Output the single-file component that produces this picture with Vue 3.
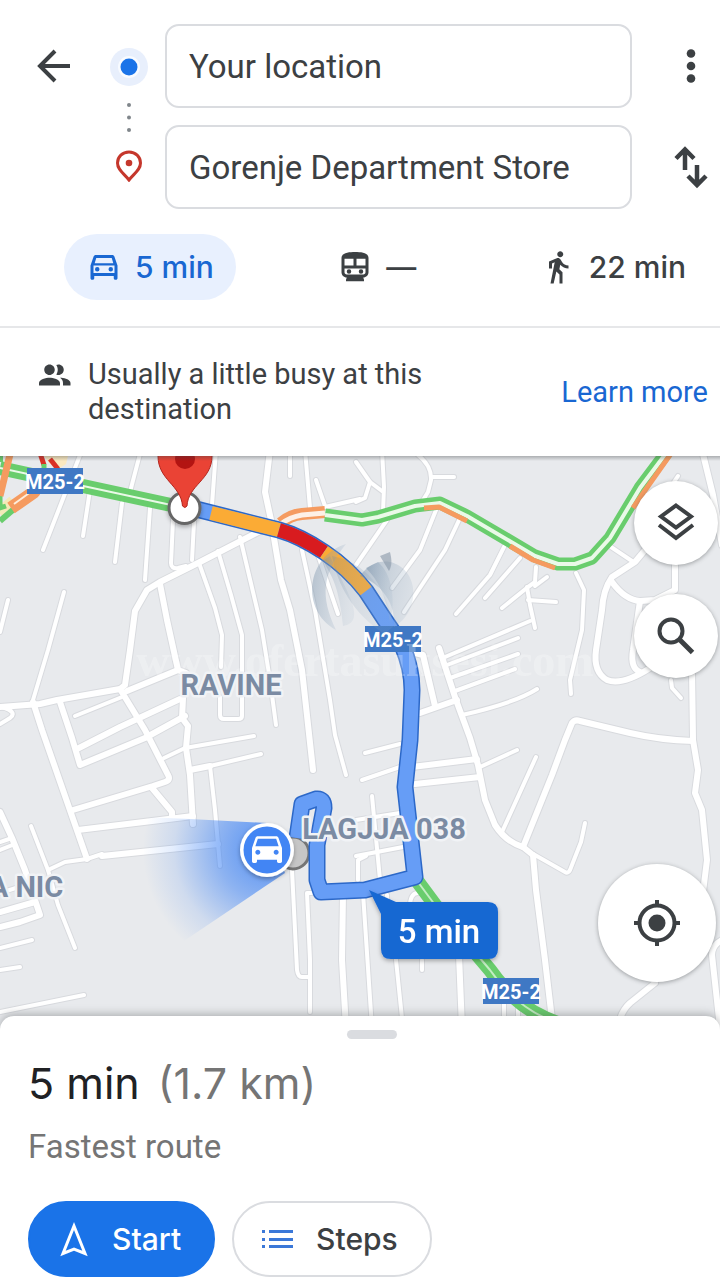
<template>
  <div class="directions">
    <header class="top">
      <form class="endpoints" @submit.prevent>
        <button type="button" class="icon-btn back" aria-label="Back">
          <svg width="44" height="44" viewBox="0 0 44 44" fill="none" stroke="#3c4043" stroke-width="4">
            <path d="M38 22H8M23 7L8 22L23 37" />
          </svg>
        </button>

        <div class="trail">
          <svg width="38" height="38" viewBox="0 0 38 38">
            <circle cx="19" cy="19" r="19" fill="#e8effc" />
            <circle cx="19" cy="19" r="11" fill="#f8fbff" />
            <circle cx="19" cy="19" r="8.500" fill="#1a73e8" />
          </svg>
          <svg width="6" height="30" viewBox="0 0 6 30" fill="#80868b">
            <circle cx="3" cy="2" r="2" />
            <circle cx="3" cy="14.500" r="2" />
            <circle cx="3" cy="27" r="2" />
          </svg>
          <svg width="26" height="32" viewBox="0 0 26 32">
            <path
              d="M13 2C6.500 2 1.500 6.800 1.500 13C1.500 20 8 23.500 13 30C18 23.500 24.500 20 24.500 13C24.500 6.800 19.500 2 13 2Z"
              fill="none" stroke="#c5372c" stroke-width="3" />
            <circle cx="13" cy="13" r="3.300" fill="#c5372c" />
          </svg>
        </div>

        <input v-model="origin" class="field from" type="text" aria-label="Starting point" />
        <input v-model="destination" class="field to" type="text" aria-label="Destination" />

        <button type="button" class="icon-btn more" aria-label="More options">
          <svg width="40" height="44" viewBox="0 0 40 44" fill="#3c4043">
            <circle cx="20" cy="9.500" r="4.300" />
            <circle cx="20" cy="22" r="4.300" />
            <circle cx="20" cy="34.500" r="4.300" />
          </svg>
        </button>
        <button type="button" class="icon-btn swap" aria-label="Swap start and destination" @click="swap">
          <svg width="40" height="44" viewBox="0 0 40 44" fill="none" stroke="#3c4043" stroke-width="4.500">
            <path d="M14 25V5M5 13.500L14 4.500L23 13.500" />
            <path d="M26 20V40M17 31L26 40L35 31" />
          </svg>
        </button>
      </form>

      <nav class="modes" aria-label="Travel mode">
        <button
          v-for="mode in modes"
          :key="mode.id"
          type="button"
          class="mode"
          :class="{ active: mode.id === activeMode }"
          :aria-label="mode.name + ' ' + mode.time"
          @click="activeMode = mode.id"
        >
          <svg width="36" height="36" viewBox="0 0 24 24" fill="currentColor">
            <path :d="mode.icon" />
          </svg>
          <span>{{ mode.time }}</span>
        </button>
      </nav>
    </header>

    <section class="notice">
      <svg class="people" width="36" height="36" viewBox="0 0 24 24" fill="#3c4043">
        <path d="M9 12c1.930 0 3.500-1.570 3.500-3.500S10.930 5 9 5 5.500 6.570 5.500 8.500 7.070 12 9 12zm0 1.750c-2.340 0-7 1.170-7 3.500V19h14v-1.750c0-2.330-4.660-3.500-7-3.500zM15 12c1.930 0 3.500-1.570 3.500-3.500S16.930 5 15 5c-.54 0-1.040.13-1.500.35.630.890 1 1.980 1 3.150s-.37 2.260-1 3.150c.46.220.960.350 1.500.350zm1.040 1.810c1.160.840 1.960 1.960 1.960 3.440V19h5v-1.750c0-2.020-3.500-3.170-5.960-3.440z" />
      </svg>
      <p>Usually a little busy at this destination</p>
      <a href="#busy">Learn more</a>
    </section>

    <main class="map">
      <svg class="canvas" viewBox="0 456 720 572" preserveAspectRatio="xMidYMid slice">
        <defs>
          <radialGradient id="beam" gradientUnits="userSpaceOnUse" cx="267" cy="850" r="124">
            <stop offset="0" stop-color="#4285f4" stop-opacity="0.900" />
            <stop offset="0.400" stop-color="#4285f4" stop-opacity="0.550" />
            <stop offset="0.750" stop-color="#4285f4" stop-opacity="0.150" />
            <stop offset="1" stop-color="#4285f4" stop-opacity="0" />
          </radialGradient>
          <linearGradient id="leaf" x1="0" y1="0" x2="1" y2="0.300">
            <stop offset="0" stop-color="#6f89a3" stop-opacity="0.450" />
            <stop offset="1" stop-color="#9fb4c8" stop-opacity="0.200" />
          </linearGradient>
          <filter id="soft" x="-30%" y="-30%" width="160%" height="160%">
            <feDropShadow dx="0" dy="2" stdDeviation="2" flood-opacity="0.300" />
          </filter>
        </defs>

        <rect x="0" y="456" width="720" height="572" fill="#e8eaed" />
        <path d="M44 456H68L66 464L60 468L50 464Z" fill="#fbe9c0" />

        <g class="lines" stroke="#d8dade">
          <path v-for="(r, i) in roads" :key="i" :d="r.d" :stroke-width="r.w + 2" />
        </g>
        <g class="lines" stroke="#fff">
          <path v-for="(r, i) in roads" :key="i" :d="r.d" :stroke-width="r.w" />
        </g>

        <g class="traffic">
          <path v-for="(t, i) in traffic" :key="i" :d="t.d" :stroke="t.color" :stroke-width="t.w" />
        </g>

        <path d="M267 823L190 819L120 816V984L285 873Z" fill="url(#beam)" />

        <circle cx="293" cy="853" r="16" fill="#c6c6c6" stroke="#757575" stroke-width="3" />

        <g fill="none" stroke-linejoin="round">
          <path :d="route" stroke="#2c68c8" stroke-width="17" />
          <path :d="route" stroke="#669df6" stroke-width="14" />
          <path d="M211 513L279 530" stroke="#fbab35" stroke-width="14" />
          <path d="M279 530Q300 536 324 552" stroke="#d81b1f" stroke-width="14" />
          <path d="M324 552Q348 568 366 591" stroke="#fbab35" stroke-width="14" />
        </g>

        <g class="shield">
          <g v-for="(s, i) in shields" :key="i">
            <rect :x="s.x - 28" :y="s.y - 13" width="56" height="26" />
            <text :x="s.x" :y="s.y + 8">M25-2</text>
          </g>
        </g>

        <g fill="url(#leaf)">
          <path d="M346 544C306 556 300 610 336 630C320 596 322 574 346 544Z" />
          <path d="M324 560C326 572 338 574 343 626C368 622 346 590 330 556Z" opacity="0.700" />
          <path d="M332 556C366 562 388 592 394 626L384 634C352 612 338 586 332 556Z" opacity="0.600" />
          <path d="M360 576C378 550 410 562 413 588C415 606 406 620 394 627C396 604 382 584 360 576Z" />
          <path d="M366 568L378 562C392 574 396 600 390 622C386 596 378 580 366 568Z" />
          <path d="M380 556L390 552C392 560 392 566 389 571Z" fill="#8796a6" opacity="0.600" />
        </g>
        <text class="watermark" x="365" y="676">www.ofertasuksesi.com</text>

        <g class="place">
          <text x="231" y="695">RAVINE</text>
          <text x="384" y="839">LAGJJA 038</text>
          <text x="26" y="897">A NIC</text>
        </g>

        <circle cx="184.500" cy="508" r="15.500" fill="#fff" stroke="#666" stroke-width="3" filter="url(#soft)" />
        <path
          d="M182.500 506C181 485 158 480 158 456V440H212V456C212 480 188 485 187 506Q185 509 182.500 506Z"
          fill="#ea4335" stroke="#b3261e" stroke-width="1" />
        <circle cx="185" cy="459" r="10" fill="#b31412" />

        <circle cx="267" cy="850" r="27" fill="#fff" filter="url(#soft)" />
        <circle cx="267" cy="850" r="23.500" fill="#4285f4" />
        <svg x="247" y="828" width="40" height="40" viewBox="0 0 24 24" fill="#fff">
          <path :d="carSolid" fill-rule="evenodd" />
        </svg>

        <g filter="url(#soft)">
          <path d="M369 890L396 902H488Q498 902 498 912V949Q498 959 488 959H391Q381 959 381 949V914Z" fill="#1967d2" />
          <text class="callout" x="439" y="943">5 min</text>
        </g>
      </svg>

      <div class="tools">
        <button type="button" class="round" aria-label="Map layers">
          <svg width="44" height="44" viewBox="0 0 44 44" fill="none" stroke="#3c4043" stroke-width="4">
            <path d="M22 4.500L37 15.500L22 26.500L7 15.500Z" />
            <path d="M5 24L22 37L39 24" />
          </svg>
        </button>
        <button type="button" class="round" aria-label="Search along route">
          <svg width="44" height="44" viewBox="0 0 44 44" fill="none" stroke="#3c4043" stroke-width="4">
            <circle cx="17" cy="17" r="11.500" />
            <path d="M25.500 25.500L38.500 38.500" stroke-width="5" />
          </svg>
        </button>
      </div>
      <button type="button" class="round locate" aria-label="My location">
        <svg width="48" height="48" viewBox="0 0 48 48" fill="none" stroke="#3c4043" stroke-width="4">
          <circle cx="24" cy="24" r="17.500" />
          <circle cx="24" cy="24" r="8.500" fill="#3c4043" stroke="none" />
          <path d="M24 1V8M24 40V47M1 24H8M40 24H47" />
        </svg>
      </button>
    </main>

    <section class="sheet">
      <div class="handle"><span></span></div>
      <h1>5 min <small>(1.7 km)</small></h1>
      <p>Fastest route</p>
      <div class="actions">
        <button type="button" class="action start">
          <svg width="36" height="40" viewBox="0 0 36 40" fill="none" stroke="#fff" stroke-width="3">
            <path d="M18 7L29 34.500L18 30L7 34.500Z" />
          </svg>
          Start
        </button>
        <button type="button" class="action">
          <svg width="36" height="40" viewBox="0 0 36 40" fill="#3b78d8">
            <path d="M2 11h3v3H2zM9 11h24v3H9zM2 19h3v3H2zM9 19h24v3H9zM2 26h3v3H2zM9 26h24v3H9z" />
          </svg>
          Steps
        </button>
      </div>
    </section>
  </div>
</template>

<script setup>
import { ref } from 'vue'

const origin = ref('Your location')
const destination = ref('Gorenje Department Store')
const activeMode = ref('drive')

function swap() {
  const from = origin.value
  origin.value = destination.value
  destination.value = from
}

const modes = [
  {
    id: 'drive',
    name: 'Driving',
    time: '5 min',
    icon: 'M18.920 5.010C18.720 4.420 18.160 4 17.500 4h-11c-.66 0-1.210.42-1.420 1.010L3 11v8.500c0 .55.45 1 1 1h.500c.55 0 1-.45 1-1V18h13v1.500c0 .55.45 1 1 1h.500c.55 0 1-.45 1-1V11l-2.080-5.990zM6.850 6h10.290l1.080 3.500H5.770L6.850 6zM19 16H5v-5h14v5zM7.500 12a1.500 1.500 0 100 3 1.500 1.500 0 000-3zM16.500 12a1.500 1.500 0 100 3 1.500 1.500 0 000-3z'
  },
  {
    id: 'transit',
    name: 'Transit',
    time: '—',
    icon: 'M12 2c-4 0-9 .5-9 4v9.500C3 17.430 4.570 19 6.500 19L6 20.500v1h12v-1L17.500 19c1.930 0 3.500-1.570 3.500-3.500V6c0-3.500-4.580-4-9-4zM5 6.500h6V11H5V6.500zm14 0V11h-6V6.500h6zM5 13h14v2.500c0 .83-.67 1.500-1.500 1.500h-11C5.670 17 5 16.330 5 15.500V13zM8 13.500a1.500 1.500 0 110 3 1.500 1.500 0 010-3zM16 13.500a1.500 1.500 0 110 3 1.500 1.500 0 010-3z'
  },
  {
    id: 'walk',
    name: 'Walking',
    time: '22 min',
    icon: 'M13.500 5.500c1.100 0 2-.9 2-2s-.9-2-2-2-2 .9-2 2 .9 2 2 2zM9.800 8.900L7 23h2.100l1.800-8 2.100 2v6h2v-7.500l-2.100-2 .6-3C14.800 12 16.800 13 19 13v-2c-1.900 0-3.500-1-4.300-2.400l-1-1.600c-.4-.6-1-1-1.700-1-.3 0-.5.1-.8.1L6 8.300V13h2V9.600l1.800-.7'
  }
]

const carSolid =
  'M18.920 6.010C18.720 5.420 18.160 5 17.500 5h-11c-.66 0-1.210.42-1.420 1.010L3 12v8c0 .55.45 1 1 1h1c.55 0 1-.45 1-1v-1h12v1c0 .55.45 1 1 1h1c.55 0 1-.45 1-1v-8l-2.080-5.990zM6.500 16c-.83 0-1.500-.67-1.500-1.500S5.670 13 6.500 13s1.500.67 1.500 1.500S7.330 16 6.500 16zm11 0c-.83 0-1.500-.67-1.500-1.500s.67-1.500 1.500-1.500 1.500.67 1.500 1.500-.67 1.500-1.500 1.500zM5 11l1.500-4.500h11L19 11H5z'

const shields = [
  { x: 55, y: 481 },
  { x: 393, y: 639 },
  { x: 511, y: 991 }
]

const route =
  'M196 509L279 530Q300 536 324 552Q348 568 366 591L385 620L402 645Q412 668 412 690L410 740L405 787L415 877L365 890L321 892L317 880V845L324 808Q324 798 316 799L302 804L297 838'

// side streets
const thin = [
  'M82 450L43 550', 'M90 490L83 536', 'M141 450L130 492', 'M122 503L115 562', 'M150 508L145 580',
  'M216 450L212 505', 'M173 520L171 563Q171 569 178 568L186 566', 'M194 522L192 560',
  'M199 563L215 608L222 635L221 667', 'M218 551L231 595L242 635V716Q242 719 238 719H224Q220 719 220 715V697',
  'M240 537L262 630L270 680L276 725', 'M290 450V476', 'M305 450L310 508', 'M316 480L325 506', 'M325 507L360 499',
  'M302 550L315 610L330 700L335 735L346 775', 'M318 555L338 614', 'M64 592L48 650L33 700', 'M8 600L0 632',
  'M2 707Q18 712 10 718L0 724', 'M75 716L122 697', 'M164 758L185 748L254 736', 'M210 766L261 754',
  'M210 766L215 810L220 866', 'M102 854L87 859L65 862L48 870', 'M31 826L48 870L58 905L75 948',
  'M0 842L12 838', 'M0 850L15 844', 'M0 893L25 885', 'M0 948L32 940', 'M0 970L20 967', 'M0 1012L84 995',
  'M292 870L297 970Q298 977 302 977H309', 'M312 893H307L310 960V1012', 'M382 450L384 487L383 512',
  'M356 462L370 482L382 491', 'M370 482L365 498L356 502', 'M418 455Q432 466 431 480L428 492L420 505',
  'M431 477H454', 'M387 520L356 565', 'M436 510L420 550L392 588', 'M460 518L445 550L404 612',
  'M505 545L490 575L456 614', 'M520 558L485 598', 'M536 567L535 582L528 587L502 608', 'M535 586L547 577',
  'M527 587L530 605L535 628', 'M528 600L556 602', 'M530 621L445 657', 'M518 638L447 665', 'M518 654L450 678',
  'M515 669L455 691', 'M537 689Q515 703 462 715', 'M576 573L584 590L582 630L570 680L571 694',
  'M611 547L632 561', 'M671 680L672 688L681 698', 'M536 757L502 832', 'M480 767L517 750',
  'M365 753L400 744', 'M362 780L400 767', 'M372 796L380 880', 'M356 820L400 813', 'M356 856L403 847',
  'M358 880V860L366 856', 'M363 893L372 1028', 'M395 950L403 1028', 'M422 960V970', 'M387 895V905',
  'M410 904Q411 893 418 893', 'M535 855L565 872Q568 874 570 870L581 842L585 823', 'M504 1000V1028',
  'M518 1000V1028', 'M674 482L678 476'
]

// wider streets
const wide = [
  'M262 530L200 562L160 582L147 590L135 611L130 650L125 685L120 689L57 700L40 704L0 707',
  'M160 584L167 620L178 670', 'M270 450L265 492L271 520L281 580L290 610L302 670L313 770',
  'M33 702L42 730L87 859', 'M60 702L72 738L80 765L145 738L185 716', 'M77 749L120 727L180 699',
  'M120 689L145 730L168 775Q171 780 165 782L153 786L73 810', 'M127 691L178 670L186 673',
  'M183 698L182 718L188 726L186 748L190 775L193 824', 'M190 770L210 766', 'M152 788L172 812V816',
  'M78 830L193 816', 'M102 856L218 844', 'M0 812L12 838L25 870L40 915L20 922L0 927', 'M0 912L35 902',
  'M343 893L342 960L346 1028', 'M459 955L462 1028', 'M439 648L456 700L470 738L478 765L485 800L495 825Q506 842 523 847L533 855',
  'M415 653L423 655L435 706', 'M420 713L457 700', 'M645 550L635 562L612 577Q603 590 602 610L596 650Q593 672 607 680Q622 686 650 668',
  'M612 582Q625 600 640 601L655 600L675 590V560', 'M640 601L633 650Q630 668 640 672',
  'M692 670L693 740L698 770L695 793L702 810L707 860L702 900', 'M702 450L713 495L722 545',
  'M523 847L552 775L565 740L572 723Q575 719 580 721L630 733Q660 740 693 741',
  'M412 767L477 759', 'M415 784L480 777', 'M533 855L536 890L545 960L553 1028',
  'M722 940Q712 945 712 955L720 1028', 'M655 983L630 1003Q620 1012 618 1028'
]

const roads = [...thin.map((d) => ({ d, w: 4 })), ...wide.map((d) => ({ d, w: 6 }))]

const green = '#69cd6d'
const orange = '#f59b60'
const pale = '#eaf9e8'
const upper =
  'M325 515L362 520L378 517L415 506L440 503L467 516L535 556L558 564H575L592 558L610 538L640 488L670 448'

const traffic = [
  { d: 'M0 468L185 508', color: green, w: 14 },
  { d: 'M0 468L185 508', color: pale, w: 2 },
  { d: 'M0 514L14 502', color: '#f3eab8', w: 14 },
  { d: 'M0 521L14 509', color: green, w: 6 },
  { d: 'M0 496V508L6 506', color: green, w: 5 },
  { d: 'M11 508L34 492L36 480', color: orange, w: 13 },
  { d: 'M14 504L32 491', color: '#fdeedd', w: 2 },
  { d: 'M0 452V462', color: green, w: 6 },
  { d: 'M11 450L0 496', color: orange, w: 7 },
  { d: 'M39 450L44 465', color: '#d93025', w: 5 },
  { d: 'M44 464V470', color: green, w: 5 },
  { d: 'M50 459L58 469', color: '#d93025', w: 5 },
  { d: 'M281 523Q290 515 302 514L325 512', color: orange, w: 12 },
  { d: 'M281 524Q290 517 302 515L325 513', color: '#fdf0e6', w: 5 },
  { d: upper, color: green, w: 13 },
  { d: upper, color: pale, w: 4 },
  { d: 'M424 508L439 507L467 521', color: orange, w: 5 },
  { d: 'M510 546L533 560L555 568', color: orange, w: 5 },
  { d: 'M633 508L646 489L675 448', color: orange, w: 5 },
  { d: 'M415 878L435 905L490 970Q514 1004 545 1018L560 1024', color: green, w: 14 },
  { d: 'M415 878L435 905L490 970Q514 1004 545 1018L560 1024', color: '#c4ecc4', w: 2 }
]
</script>

<style>
body {
  margin: 0;
  background: #fff;
}
</style>

<style scoped>
.directions {
  display: flex;
  flex-direction: column;
  min-height: 100vh;
  font-family: Roboto, "Liberation Sans", sans-serif;
  color: #3c4043;
}

button {
  border: 0;
  padding: 0;
  background: none;
  color: inherit;
  font-family: inherit;
  cursor: pointer;
}

svg {
  display: block;
  flex-shrink: 0;
}

.top {
  padding: 24px 0 26px;
  border-bottom: 2px solid #e6e7e9;
}

.endpoints {
  display: grid;
  grid-template-columns: 108px 42px 1fr 58px;
  grid-template-rows: 84px 84px;
  row-gap: 17px;
}

.icon-btn {
  display: flex;
  align-items: center;
  justify-content: center;
}

.back {
  grid-area: 1 / 1;
}

.more {
  grid-area: 1 / 4;
}

.swap {
  grid-area: 2 / 4;
}

.trail {
  grid-area: 1 / 2 / 3 / 3;
  display: flex;
  flex-direction: column;
  align-items: center;
  justify-content: center;
  gap: 17px;
  padding-bottom: 4px;
}

.field {
  box-sizing: border-box;
  min-width: 0;
  margin: 0 30px 0 15px;
  padding: 0 22px;
  border: 2px solid #dadce0;
  border-radius: 14px;
  background: #fff;
  color: #3c4043;
  font-family: inherit;
  font-size: 33px;
  outline: none;
}

.from {
  grid-area: 1 / 3;
}

.to {
  grid-area: 2 / 3;
}

.modes {
  display: flex;
  justify-content: space-between;
  margin-top: 25px;
  padding: 0 12px 0 64px;
}

.mode {
  display: flex;
  align-items: center;
  gap: 13px;
  height: 66px;
  padding: 0 22px;
  border-radius: 33px;
  font-family: Inter, Roboto, sans-serif;
  font-size: 30px;
  font-weight: 500;
}

.mode.active {
  background: #e8f0fe;
  color: #1967d2;
}

.notice {
  display: flex;
  align-items: center;
  padding: 29px 12px 29px 36px;
  font-size: 29px;
  line-height: 35px;
}

.people {
  align-self: flex-start;
}

.notice p {
  flex: 1;
  margin: 0 16px;
}

.notice a {
  color: #1967d2;
  text-decoration: none;
  white-space: nowrap;
}

.map {
  position: relative;
  flex: 1;
  min-height: 400px;
  overflow: hidden;
  background: #e8eaed;
}

.map::before {
  content: "";
  position: absolute;
  inset: 0 0 auto;
  z-index: 1;
  height: 5px;
  background: linear-gradient(rgba(60, 64, 67, 0.35), rgba(60, 64, 67, 0));
}

.canvas {
  position: absolute;
  width: 100%;
  height: 100%;
}

.lines,
.traffic {
  fill: none;
  stroke-linejoin: round;
}

.lines {
  stroke-linecap: round;
}

.shield rect {
  fill: #3f78c4;
}

.shield text {
  fill: #fff;
  font-size: 20px;
  font-weight: 700;
  text-anchor: middle;
}

.place text {
  fill: #7b8ba3;
  stroke: #f1f3f6;
  stroke-width: 5px;
  stroke-linejoin: round;
  paint-order: stroke;
  font-size: 29px;
  font-weight: 700;
  text-anchor: middle;
}

.watermark {
  fill: #fff;
  opacity: 0.25;
  font-family: "Liberation Serif", serif;
  font-size: 46px;
  font-weight: 700;
  text-anchor: middle;
}

.callout {
  fill: #fff;
  font-size: 33px;
  font-weight: 500;
  text-anchor: middle;
}

.tools {
  position: absolute;
  top: 25px;
  right: 2px;
  display: flex;
  flex-direction: column;
  gap: 29px;
}

.round {
  display: flex;
  align-items: center;
  justify-content: center;
  width: 84px;
  height: 84px;
  border-radius: 50%;
  background: #fff;
  box-shadow: 0 1px 4px rgba(60, 64, 67, 0.45);
}

.locate {
  position: absolute;
  right: 4px;
  bottom: 46px;
  width: 118px;
  height: 118px;
}

.sheet {
  position: relative;
  margin-top: -12px;
  padding: 14px 28px 3px;
  border-radius: 14px 14px 0 0;
  background: #fff;
  box-shadow: 0 -2px 8px rgba(60, 64, 67, 0.35);
}

.handle {
  display: flex;
  justify-content: center;
  padding-left: 24px;
}

.handle span {
  width: 50px;
  height: 9px;
  border-radius: 5px;
  background: #dadce0;
}

.sheet h1 {
  margin: 16px 0 0;
  color: #202124;
  font-family: Inter, Roboto, sans-serif;
  font-size: 43px;
  font-weight: 400;
  line-height: 56px;
}

.sheet h1 small {
  margin-left: 6px;
  color: #757575;
  font-size: inherit;
}

.sheet p {
  margin: 16px 0 34px;
  color: #757575;
  font-size: 33px;
  line-height: 40px;
}

.actions {
  display: flex;
  flex-wrap: wrap;
  gap: 17px;
}

.action {
  display: flex;
  align-items: center;
  gap: 20px;
  height: 76px;
  padding: 0 32px 0 26px;
  border: 2px solid #dadce0;
  border-radius: 38px;
  font-family: Inter, Roboto, sans-serif;
  font-size: 30px;
  font-weight: 500;
}

.start {
  border-color: #1a73e8;
  background: #1a73e8;
  color: #fff;
}
</style>
